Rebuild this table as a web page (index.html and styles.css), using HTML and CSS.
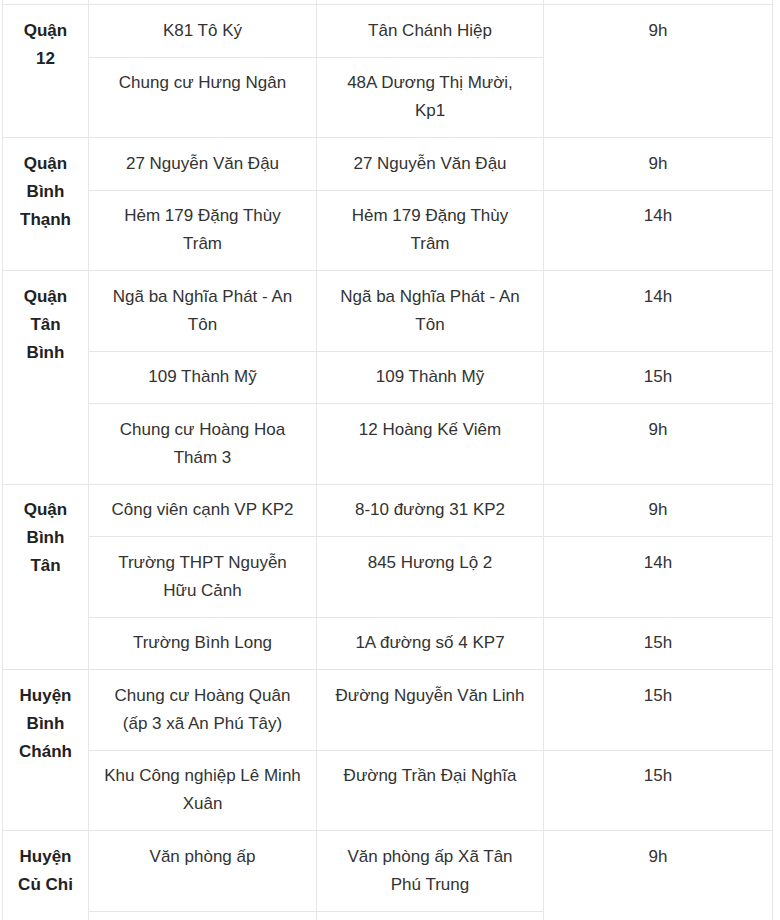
FILE: index.html
```html
<!DOCTYPE html>
<html lang="vi">
<head>
<meta charset="utf-8">
<title>Lịch</title>
<link rel="stylesheet" href="styles.css">
</head>
<body>
<table class="schedule">
  <colgroup>
    <col class="c-district">
    <col class="c-place">
    <col class="c-addr">
    <col class="c-time">
  </colgroup>
  <tbody>
    <tr class="cut"><td></td><td></td><td></td><td></td></tr>
    <tr>
      <td class="district" rowspan="2">Quận 12</td>
      <td>K81 Tô Ký</td>
      <td>Tân Chánh Hiệp</td>
      <td rowspan="2">9h</td>
    </tr>
    <tr>
      <td>Chung cư Hưng Ngân</td>
      <td>48A Dương Thị Mười, Kp1</td>
    </tr>
    <tr>
      <td class="district" rowspan="2">Quận Bình Thạnh</td>
      <td>27 Nguyễn Văn Đậu</td>
      <td>27 Nguyễn Văn Đậu</td>
      <td>9h</td>
    </tr>
    <tr>
      <td>Hẻm 179 Đặng Thùy Trâm</td>
      <td>Hẻm 179 Đặng Thùy Trâm</td>
      <td>14h</td>
    </tr>
    <tr>
      <td class="district" rowspan="3">Quận Tân Bình</td>
      <td>Ngã ba Nghĩa Phát - An Tôn</td>
      <td>Ngã ba Nghĩa Phát - An Tôn</td>
      <td>14h</td>
    </tr>
    <tr>
      <td>109 Thành Mỹ</td>
      <td>109 Thành Mỹ</td>
      <td>15h</td>
    </tr>
    <tr>
      <td>Chung cư Hoàng Hoa Thám 3</td>
      <td>12 Hoàng Kế Viêm</td>
      <td>9h</td>
    </tr>
    <tr>
      <td class="district" rowspan="3">Quận Bình Tân</td>
      <td>Công viên cạnh VP KP2</td>
      <td>8-10 đường 31 KP2</td>
      <td>9h</td>
    </tr>
    <tr>
      <td>Trường THPT Nguyễn Hữu Cảnh</td>
      <td>845 Hương Lộ 2</td>
      <td>14h</td>
    </tr>
    <tr>
      <td>Trường Bình Long</td>
      <td>1A đường số 4 KP7</td>
      <td>15h</td>
    </tr>
    <tr>
      <td class="district" rowspan="2">Huyện Bình Chánh</td>
      <td>Chung cư Hoàng Quân (ấp 3 xã An Phú Tây)</td>
      <td>Đường Nguyễn Văn Linh</td>
      <td>15h</td>
    </tr>
    <tr>
      <td>Khu Công nghiệp Lê Minh Xuân</td>
      <td>Đường Trần Đại Nghĩa</td>
      <td>15h</td>
    </tr>
    <tr>
      <td class="district" rowspan="2">Huyện Củ Chi</td>
      <td>Văn phòng ấp</td>
      <td>Văn phòng ấp Xã Tân Phú Trung</td>
      <td rowspan="2">9h</td>
    </tr>
    <tr>
      <td>&nbsp;</td>
      <td>&nbsp;</td>
    </tr>
  </tbody>
</table>
</body>
</html>
```

FILE: styles.css
```css
html, body {
  margin: 0;
  padding: 0;
  background: #ffffff;
}

body {
  font-family: "Liberation Sans", Arial, sans-serif;
  font-size: 17px;
  color: #333333;
}

.schedule {
  border-collapse: collapse;
  table-layout: fixed;
  width: 770px;
  margin: -13px 0 0 2px;
}

.c-district { width: 86px; }
.c-place { width: 228px; }
.c-addr { width: 227px; }
.c-time { width: 229px; }

.schedule td {
  border: 1px solid #e6e6e6;
  padding: 11.75px 14.5px;
  line-height: 28px;
  text-align: center;
  vertical-align: top;
}

.schedule .cut td {
  height: 16px;
  padding: 0;
}

.schedule td.district {
  font-weight: bold;
  color: #222222;
  padding-left: 10px;
  padding-right: 10px;
}
```
